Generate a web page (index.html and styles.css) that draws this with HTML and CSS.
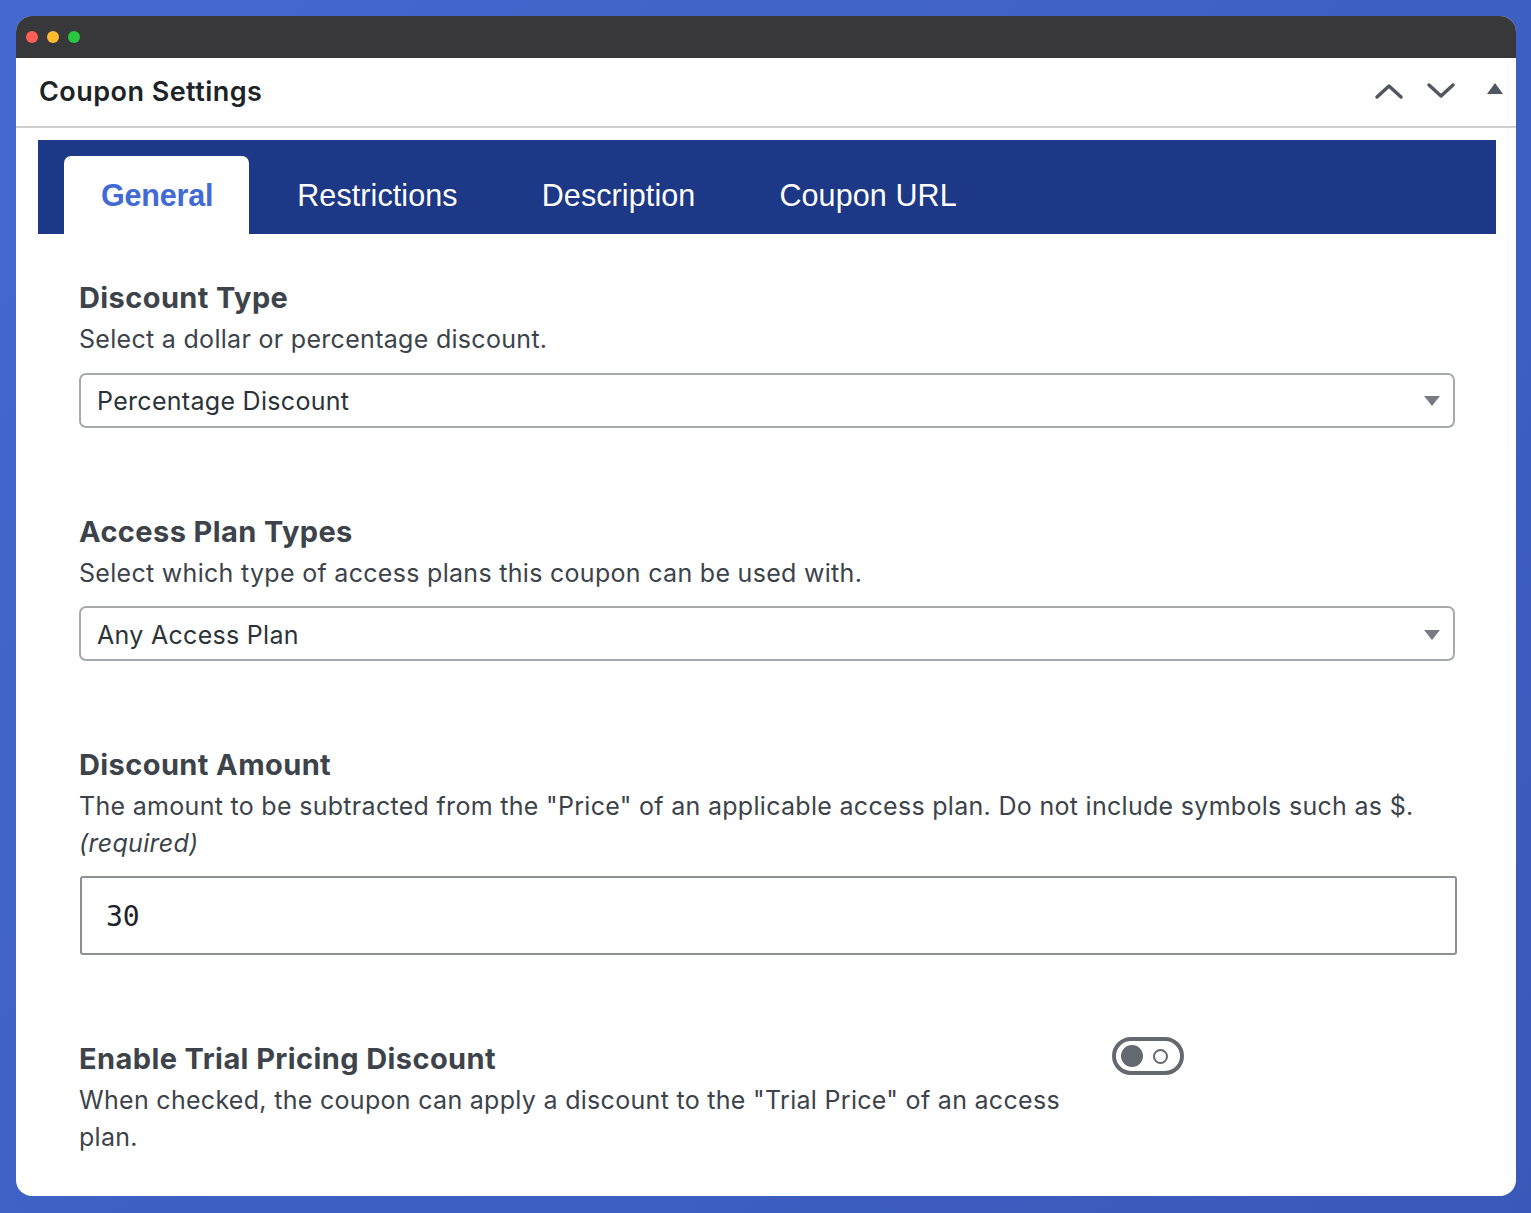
FILE: index.html
```html
<!DOCTYPE html>
<html>
<head>
<meta charset="utf-8">
<link rel="stylesheet" href="styles.css">
</head>
<body>
<div class="window">
  <div class="titlebar">
    <span class="dot red"></span><span class="dot yellow"></span><span class="dot green"></span>
  </div>
  <div class="panel-head">
    <h2 class="panel-title">Coupon Settings</h2>
    <div class="head-actions">
      <svg class="hicon" width="30" height="20" viewBox="0 0 30 20"><path d="M3 16 L15 5 L27 16" fill="none" stroke="#50575e" stroke-width="3.5" stroke-linecap="round" stroke-linejoin="round"/></svg>
      <svg class="hicon" width="30" height="20" viewBox="0 0 30 20"><path d="M3 4 L15 15 L27 4" fill="none" stroke="#50575e" stroke-width="3.5" stroke-linecap="round" stroke-linejoin="round"/></svg>
      <svg class="hicon tri" width="18" height="14" viewBox="0 0 18 14"><path d="M9 1 L17 12 L1 12 Z" fill="#50575e"/></svg>
    </div>
  </div>
  <div class="body">
    <nav class="tabs">
      <span class="tab active">General</span>
      <span class="tab first">Restrictions</span>
      <span class="tab">Description</span>
      <span class="tab">Coupon URL</span>
    </nav>
    <div class="content">
      <section class="field">
        <h3 class="label">Discount Type</h3>
        <p class="desc">Select a dollar or percentage discount.</p>
        <div class="select"><span>Percentage Discount</span><span class="caret"></span></div>
      </section>
      <section class="field">
        <h3 class="label">Access Plan Types</h3>
        <p class="desc">Select which type of access plans this coupon can be used with.</p>
        <div class="select"><span>Any Access Plan</span><span class="caret"></span></div>
      </section>
      <section class="field">
        <h3 class="label">Discount Amount</h3>
        <p class="desc">The amount to be subtracted from the "Price" of an applicable access plan. Do not include symbols such as $. <em>(required)</em></p>
        <div class="input">30</div>
      </section>
      <section class="field row">
        <div class="row-text">
          <h3 class="label">Enable Trial Pricing Discount</h3>
          <p class="desc">When checked, the coupon can apply a discount to the "Trial Price" of an access plan.</p>
        </div>
        <div class="toggle"><span class="knob"></span><span class="ring"></span></div>
      </section>
    </div>
  </div>
</div>
</body>
</html>
```

FILE: styles.css
```css
* { box-sizing: border-box; }
html, body { margin: 0; padding: 0; }
body {
  width: 1531px;
  height: 1213px;
  background: linear-gradient(135deg, #4468d0 0%, #3d5fc4 60%, #3a58b8 100%);
  padding: 16px 15px 0 16px;
  font-family: "Inter", "Liberation Sans", sans-serif;
  overflow: hidden;
}
.window {
  width: 1500px;
  height: 1180px;
  background: #fff;
  border-radius: 16px;
  overflow: hidden;
}
.titlebar {
  height: 42px;
  background: #38383a;
  display: flex;
  align-items: center;
  padding-left: 10px;
  gap: 9px;
}
.dot { width: 12px; height: 12px; border-radius: 50%; display: block; }
.red { background: #fe5f57; }
.yellow { background: #febc2e; }
.green { background: #28c840; }
.panel-head {
  height: 70px;
  border-bottom: 2px solid #cfcfcf;
  display: flex;
  align-items: center;
  justify-content: space-between;
  padding: 0 12px 2px 23px;
}
.panel-title {
  margin: 0;
  font-size: 27px;
  font-weight: 600;
  color: #1d2327;
  letter-spacing: 0.45px;
}
.head-actions { display: flex; align-items: center; gap: 22px; }
.hicon { display: block; }
.tri { margin-left: 8px; margin-top: -4px; }
.body { padding: 12px 20px 0 22px; }
.tabs {
  background: #1d3886;
  height: 94px;
  display: flex;
  align-items: flex-end;
  padding-left: 26px;
}
.tab {
  font-family: "Liberation Sans", Arial, sans-serif;
  font-size: 30.5px;
  color: #fff;
  height: 78px;
  display: flex;
  align-items: center;
  padding: 0 42px;
  letter-spacing: 0.1px;
}
.tab.first { margin-left: 6px; }
.tab.active {
  background: #fff;
  color: #416ad4;
  font-weight: bold;
  border-radius: 7px 7px 0 0;
  padding: 0 36px 0 37px;
  letter-spacing: -0.2px;
}
.content { padding: 46px 41px 0 41px; }
.field { margin-bottom: 86px; }
.label {
  margin: 0 0 5px 0;
  font-size: 29px;
  line-height: 36px;
  font-weight: 700;
  color: #3c434a;
  letter-spacing: 0.4px;
}
.desc {
  margin: 0 0 15px 0;
  font-size: 25px;
  line-height: 36.5px;
  color: #3c434a;
  letter-spacing: 0.3px;
}
.desc em { font-style: italic; }
.select {
  height: 55px;
  border: 2px solid #a7aaad;
  border-radius: 7px;
  display: flex;
  align-items: center;
  justify-content: space-between;
  padding: 2px 13px 0 16px;
  font-size: 25px;
  letter-spacing: 0.3px;
  color: #2c3338;
}
.caret {
  width: 0; height: 0;
  border-left: 8px solid transparent;
  border-right: 8px solid transparent;
  border-top: 10px solid #787c82;
}
.input {
  height: 79px;
  margin-left: 1px;
  margin-right: -2px;
  border: 2px solid #8c8f94;
  border-radius: 3px;
  display: flex;
  align-items: center;
  padding-left: 24px;
  padding-top: 2px;
  font-family: "DejaVu Sans Mono", "Liberation Mono", monospace;
  font-size: 28px;
  color: #1d2327;
}
.row { display: flex; align-items: flex-start; }
.row-text { width: 1000px; }
.toggle {
  margin-left: 33px;
  margin-top: -4px;
  width: 72px;
  height: 38px;
  border: 4px solid #646970;
  border-radius: 19px;
  display: flex;
  align-items: center;
  padding-left: 5px;
  gap: 10px;
}
.knob { width: 22px; height: 22px; border-radius: 50%; background: #646970; display: block; }
.ring { width: 15px; height: 15px; border-radius: 50%; border: 2px solid #646970; display: block; }
```
